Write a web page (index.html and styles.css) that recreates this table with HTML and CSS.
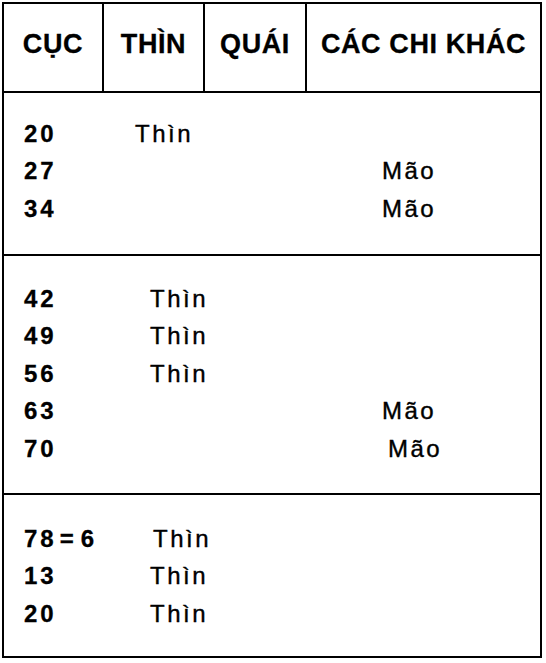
FILE: index.html
```html
<!DOCTYPE html>
<html lang="vi">
<head>
<meta charset="utf-8">
<title>Cục – Thìn – Quái</title>
<link rel="stylesheet" href="styles.css">
</head>
<body>
<div class="sheet">
  <div class="head">
    <div class="hcell">CỤC</div>
    <div class="hcell">THÌN</div>
    <div class="hcell">QUÁI</div>
    <div class="hcell last">CÁC CHI KHÁC</div>
  </div>

  <div class="section s1">
    <div class="row"><span class="num">20</span><span class="thin">Thìn</span><span class="mao"></span></div>
    <div class="row"><span class="num">27</span><span class="thin"></span><span class="mao">Mão</span></div>
    <div class="row"><span class="num">34</span><span class="thin"></span><span class="mao">Mão</span></div>
  </div>

  <div class="section s2">
    <div class="row"><span class="num">42</span><span class="thin shift">Thìn</span><span class="mao"></span></div>
    <div class="row"><span class="num">49</span><span class="thin shift">Thìn</span><span class="mao"></span></div>
    <div class="row"><span class="num">56</span><span class="thin shift">Thìn</span><span class="mao"></span></div>
    <div class="row"><span class="num">63</span><span class="thin"></span><span class="mao">Mão</span></div>
    <div class="row"><span class="num">70</span><span class="thin"></span><span class="mao shift-s">Mão</span></div>
  </div>

  <div class="section s3 end">
    <div class="row"><span class="num">78<span class="eq">=</span>6</span><span class="thin shift-l">Thìn</span><span class="mao"></span></div>
    <div class="row"><span class="num">13</span><span class="thin shift">Thìn</span><span class="mao"></span></div>
    <div class="row"><span class="num">20</span><span class="thin shift">Thìn</span><span class="mao"></span></div>
  </div>
</div>
</body>
</html>
```

FILE: styles.css
```css
html, body {
  margin: 0;
  padding: 0;
  background: #ffffff;
}

body {
  padding: 2px 0 0 2px;
  font-family: "Liberation Sans", Arial, sans-serif;
  color: #000;
}

.sheet {
  width: 540px;
  box-sizing: border-box;
  border: 2px solid #000;
}

.head {
  display: grid;
  grid-template-columns: 100px 101px 102px 1fr;
  height: 89px;
  border-bottom: 2px solid #000;
  box-sizing: border-box;
}

.hcell {
  display: flex;
  align-items: center;
  justify-content: center;
  box-sizing: border-box;
  border-right: 2px solid #000;
  font-weight: bold;
  font-size: 27px;
  letter-spacing: 0.6px;
  padding-bottom: 7px;
  -webkit-text-stroke: 0.3px #000;
}

.hcell.last {
  border-right: none;
}

.section {
  border-bottom: 2px solid #000;
  box-sizing: border-box;
}

.section.end {
  border-bottom: none;
}

.s1 { height: 163px; padding-top: 22px; }
.s2 { height: 239px; padding-top: 24px; }
.s3 { height: 161px; padding-top: 25px; }

.row {
  display: grid;
  grid-template-columns: 111px 247px 1fr;
  padding-left: 20px;
  height: 37.4px;
  line-height: 37.4px;
  font-size: 24px;
}

.num {
  font-weight: bold;
  letter-spacing: 3px;
  -webkit-text-stroke: 0.3px #000;
}

.eq {
  margin: 0 4px 0 3px;
}

.thin,
.mao {
  letter-spacing: 2.5px;
  -webkit-text-stroke: 0.4px #000;
}

.thin.shift { padding-left: 15px; }
.thin.shift-l { padding-left: 18px; }
.mao.shift-s { padding-left: 6px; }
```
